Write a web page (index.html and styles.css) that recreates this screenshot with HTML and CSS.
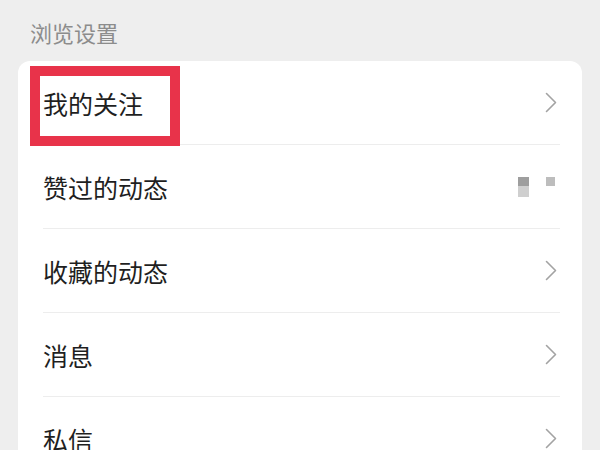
FILE: index.html
```html
<!DOCTYPE html>
<html lang="zh-CN">
<head>
<meta charset="utf-8">
<link rel="stylesheet" href="styles.css">
</head>
<body>
<div class="page">
  <div class="section-title">浏览设置</div>
  <div class="card">
    <div class="highlight"></div>
    <div class="row">
      <span class="label">我的关注</span>
      <svg class="chev" width="12" height="21" viewBox="0 0 12 21"><path d="M1.5 1.5 L10.5 10.5 L1.5 19.5" fill="none" stroke="#a3a3a3" stroke-width="1.6" stroke-linecap="round" stroke-linejoin="round"/></svg>
    </div>
    <div class="row">
      <span class="label">赞过的动态</span>
      <span class="thumbs">
        <span class="thumb-a"><span class="ta-top"></span><span class="ta-bot"></span></span>
        <span class="thumb-b"></span>
      </span>
    </div>
    <div class="row">
      <span class="label">收藏的动态</span>
      <svg class="chev" width="12" height="21" viewBox="0 0 12 21"><path d="M1.5 1.5 L10.5 10.5 L1.5 19.5" fill="none" stroke="#a3a3a3" stroke-width="1.6" stroke-linecap="round" stroke-linejoin="round"/></svg>
    </div>
    <div class="row">
      <span class="label">消息</span>
      <svg class="chev" width="12" height="21" viewBox="0 0 12 21"><path d="M1.5 1.5 L10.5 10.5 L1.5 19.5" fill="none" stroke="#a3a3a3" stroke-width="1.6" stroke-linecap="round" stroke-linejoin="round"/></svg>
    </div>
    <div class="row">
      <span class="label">私信</span>
      <svg class="chev" width="12" height="21" viewBox="0 0 12 21"><path d="M1.5 1.5 L10.5 10.5 L1.5 19.5" fill="none" stroke="#a3a3a3" stroke-width="1.6" stroke-linecap="round" stroke-linejoin="round"/></svg>
    </div>
  </div>
</div>
</body>
</html>
```
FILE: styles.css
```css
html, body {
  margin: 0;
  padding: 0;
  background: #eeeeee;
  height: 100%;
  overflow: hidden;
}
.page {
  font-family: "Noto Sans CJK SC", "Noto Sans", sans-serif;
}
.section-title {
  padding: 17px 0 0 30px;
  height: 44px;
  box-sizing: border-box;
  font-size: 22px;
  line-height: 30px;
  color: #8c8c8c;
}
.card {
  position: relative;
  margin: 17px 18px 0 18px;
  background: #ffffff;
  border-radius: 12px;
  height: 460px;
}
.highlight {
  position: absolute;
  left: 12px;
  top: 5px;
  width: 150px;
  height: 80px;
  box-sizing: border-box;
  border: 10px solid #e8334a;
}
.row {
  display: flex;
  align-items: center;
  justify-content: space-between;
  height: 83px;
  margin: 0 22px 0 25px;
  padding-right: 3px;
  border-bottom: 1px solid #ededed;
}
.label {
  font-size: 25px;
  color: #1f1f1f;
  line-height: 30px;
}
.chev {
  display: block;
}
.thumbs {
  display: flex;
  align-items: flex-start;
  gap: 17px;
  margin-right: 2px;
}
.thumb-a {
  display: flex;
  flex-direction: column;
  width: 11px;
}
.ta-top {
  height: 9px;
  background: #9e9e9e;
}
.ta-bot {
  height: 11px;
  background: #cfcfcf;
}
.thumb-b {
  width: 9px;
  height: 9px;
  background: #bdbdbd;
}
```
